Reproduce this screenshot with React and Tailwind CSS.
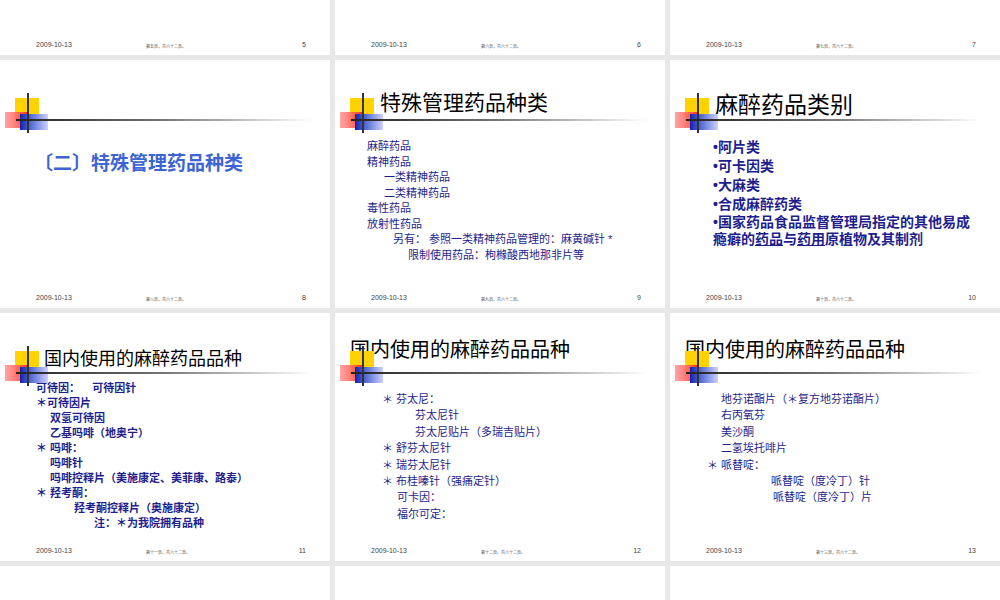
const F = { fontFamily: '"Liberation Sans","Noto Sans CJK SC",sans-serif' };

function Logo() {
  return (
    <div className="absolute left-[4px] top-[36px] w-[320px] h-[44px] pointer-events-none">
      <div className="absolute left-[11px] top-[2px] w-[24px] h-[24px] bg-[#ffd200]" />
      <div className="absolute left-[1px] top-[16px] w-[22px] h-[16px] bg-gradient-to-r from-[#ff9a9a] to-[#ff1e1e] opacity-90" />
      <div className="absolute left-[16px] top-[18px] w-[28px] h-[16px] bg-gradient-to-r from-[#1a1ab0] to-[#d0d0ff]" />
      <div className="absolute left-[23px] top-[-3px] w-[2px] h-[40px] bg-[#333]" />
      <div className="absolute left-[12px] top-[23px] w-[296px] h-[2px] bg-gradient-to-r from-[#222] via-[#777] to-transparent" />
    </div>
  );
}

function Footer({ n, mid }) {
  return (
    <div className="absolute left-0 right-0 bottom-[5px] flex items-end px-[36px] text-[7px] text-[#444]" style={F}>
      <span className="w-[110px]">2009-10-13</span>
      <span className="text-[4px] flex-1">{mid}</span>
      <span className="text-[7px] mr-[-12px]">{n}</span>
    </div>
  );
}

function Slide({ n, mid, logo, children, cls = "" }) {
  return (
    <div className={"relative bg-white overflow-hidden " + cls} style={F}>
      {logo && <Logo />}
      {children}
      {n && <Footer n={n} mid={mid} />}
    </div>
  );
}

const navy = "text-[#1e1e8c]";

export default function App() {
  return (
    <div className="w-[1000px] h-[600px] bg-[#e8e8e8] overflow-hidden grid grid-cols-[330px_330px_330px] grid-rows-[55px_248px_248px_40px] gap-x-[5px] gap-y-[5px]">
      <Slide n="5" mid="第五页，共六十二页。" />
      <Slide n="6" mid="第六页，共六十二页。" />
      <Slide n="7" mid="第七页，共六十二页。" />

      <Slide n="8" mid="第八页，共六十二页。" logo>
        <div className="pt-[90px] pl-[34px] text-[19px] text-[#3c64d2] font-bold">〔二〕特殊管理药品种类</div>
      </Slide>
      <Slide n="9" mid="第九页，共六十二页。" logo>
        <div className="pt-[32px] pl-[45px] text-[21px] text-black leading-none">特殊管理药品种类</div>
        <div className={"pt-[26px] pl-[32px] text-[11px] leading-[15.5px] " + navy}>
          <div>麻醉药品</div>
          <div>精神药品</div>
          <div className="pl-[17px]">一类精神药品</div>
          <div className="pl-[17px]">二类精神药品</div>
          <div>毒性药品</div>
          <div>放射性药品</div>
          <div className="pl-[26px]">另有： 参照一类精神药品管理的：麻黄碱针 *</div>
          <div className="pl-[41px]">限制使用药品：枸橼酸西地那非片等</div>
        </div>
      </Slide>
      <Slide n="10" mid="第十页，共六十二页。" logo>
        <div className="pt-[34px] pl-[45px] text-[23px] text-black leading-none">麻醉药品类别</div>
        <div className={"pt-[21px] pl-[43px] pr-[24px] text-[14px] leading-[19px] font-bold " + navy}>
          <div>•阿片类</div>
          <div>•可卡因类</div>
          <div>•大麻类</div>
          <div>•合成麻醉药类</div>
          <div className="leading-[17px]">•国家药品食品监督管理局指定的其他易成瘾癖的<span className="underline">药品</span>与<span className="underline">药用</span>原植物及其制剂</div>
        </div>
      </Slide>

      <Slide n="11" mid="第十一页，共六十二页。" logo>
        <div className="pt-[37px] pl-[44px] text-[18px] text-black leading-none">国内使用的麻醉药品品种</div>
        <div className={"pt-[13px] pl-[36px] text-[11px] leading-[15px] font-bold " + navy}>
          <div>可待因：&nbsp;&nbsp;&nbsp; 可待因针</div>
          <div>＊可待因片</div>
          <div className="pl-[14px]">双氢可待因</div>
          <div className="pl-[14px]">乙基吗啡（地奥宁）</div>
          <div>＊ 吗啡：</div>
          <div className="pl-[14px]">吗啡针</div>
          <div className="pl-[14px]">吗啡控释片（美施康定、美菲康、路泰）</div>
          <div>＊ 羟考酮：</div>
          <div className="pl-[38px]">羟考酮控释片（奥施康定）</div>
          <div className="pl-[58px]">注：＊为我院拥有品种</div>
        </div>
      </Slide>
      <Slide n="12" mid="第十二页，共六十二页。" logo>
        <div className="pt-[27px] pl-[15px] text-[20px] text-black leading-none">国内使用的麻醉药品品种</div>
        <div className={"pt-[31px] pl-[47px] text-[11px] leading-[16.4px] " + navy}>
          <div>＊ 芬太尼：</div>
          <div className="pl-[33px]">芬太尼针</div>
          <div className="pl-[33px]">芬太尼贴片（多瑞吉贴片）</div>
          <div>＊ 舒芬太尼针</div>
          <div>＊ 瑞芬太尼针</div>
          <div>＊ 布桂嗪针（强痛定针）</div>
          <div className="pl-[15px]">可卡因：</div>
          <div className="pl-[15px]">福尔可定：</div>
        </div>
      </Slide>
      <Slide n="13" mid="第十三页，共六十二页。" logo>
        <div className="pt-[27px] pl-[15px] text-[20px] text-black leading-none">国内使用的麻醉药品品种</div>
        <div className={"pt-[31px] pl-[37px] text-[11px] leading-[16.4px] " + navy}>
          <div className="pl-[14px]">地芬诺酯片（＊复方地芬诺酯片）</div>
          <div className="pl-[14px]">右丙氧芬</div>
          <div className="pl-[14px]">美沙酮</div>
          <div className="pl-[14px]">二氢埃托啡片</div>
          <div>＊ 哌替啶：</div>
          <div className="pl-[64px]">哌替啶（度冷丁）针</div>
          <div className="pl-[66px]">哌替啶（度冷丁）片</div>
        </div>
      </Slide>

      <Slide logo={false} />
      <Slide logo={false} />
      <Slide logo={false} />
    </div>
  );
}
